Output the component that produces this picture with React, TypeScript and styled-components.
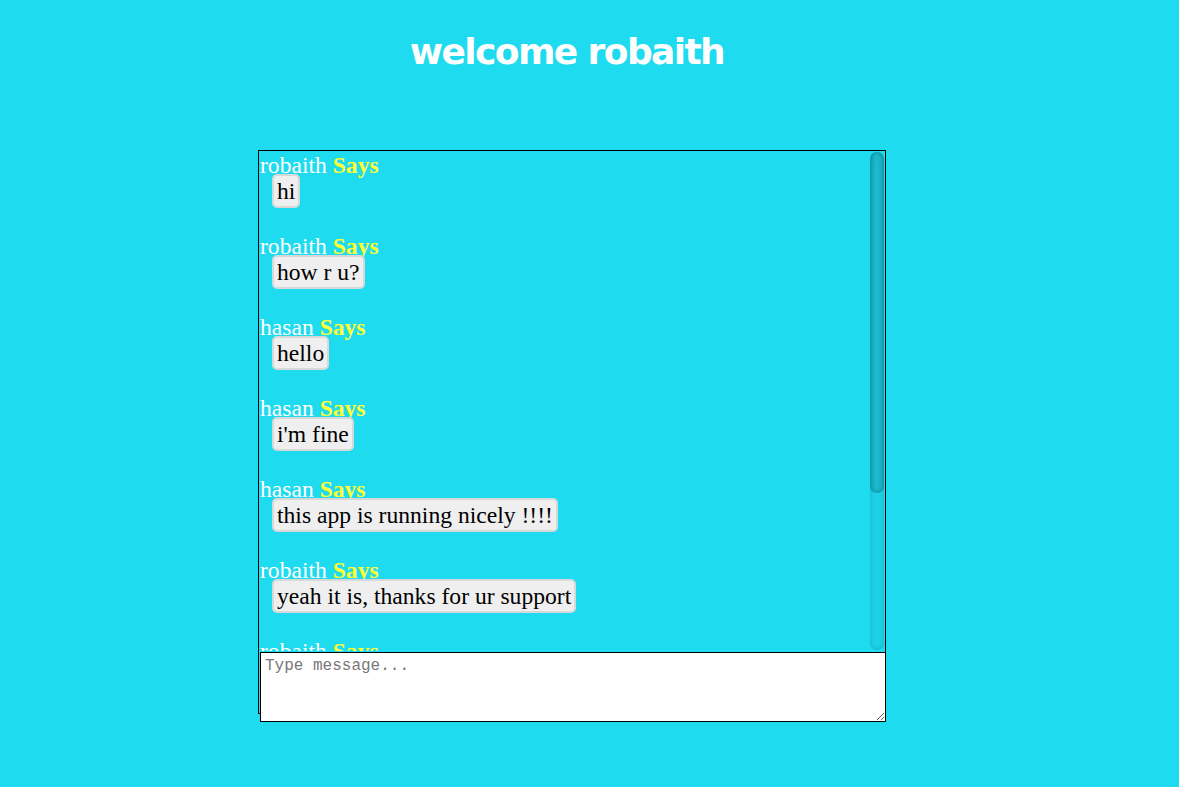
import React from "react";
import styled, { createGlobalStyle } from "styled-components";

const GlobalStyle = createGlobalStyle`
  html, body {
    margin: 0;
    padding: 0;
    background: #1fdbef;
  }
  body {
    font-family: "Liberation Serif", "Times New Roman", serif;
  }
`;

const Page = styled.div`
  width: 1179px;
  height: 787px;
  background: #1fdbef;
  display: flex;
  flex-direction: column;
  overflow: hidden;
`;

const Title = styled.h1`
  margin: 0;
  padding: 27px 45px 0 0;
  height: 50px;
  text-align: center;
  color: #ffffff;
  font-family: "DejaVu Sans", Verdana, sans-serif;
  font-weight: bold;
  font-size: 36px;
  letter-spacing: -1.6px;
  line-height: 50px;
`;

const ChatBox = styled.div`
  margin: 73px 0 0 258px;
  width: 626px;
  height: 562px;
  border: 1px solid #000;
  box-sizing: content-box;
`;

const MessageArea = styled.div`
  display: flex;
  height: 500px;
`;

const MessageList = styled.div`
  flex: 1;
  overflow: hidden;
  padding: 3px 1px 0 1px;
`;

const ScrollTrack = styled.div`
  width: 14px;
  margin: 1px 1px 1px 0;
  border-radius: 10px;
  background: #1dd2e6;
  box-shadow: inset 0 0 4px rgba(0, 60, 70, 0.25);
  display: flex;
  flex-direction: column;
`;

const ScrollThumb = styled.div`
  border-radius: 10px;
  background: linear-gradient(to right, #16a9bb, #1bbcd0 45%, #17aec1);
  box-shadow: inset 0 0 5px rgba(0, 50, 60, 0.35);
`;

const Message = styled.div`
  margin-bottom: 27px;
`;

const Author = styled.div`
  color: #ffffff;
  font-size: 23.6px;
  line-height: 18px;
  padding-top: 2px;
`;

const Says = styled.b`
  color: #ffff33;
`;

const Bubble = styled.span`
  display: inline-block;
  margin-left: 12px;
  padding: 1px 3px;
  background: #efefef;
  border: 2px solid #d8d8d8;
  border-radius: 5px;
  color: #000;
  font-size: 23.6px;
  line-height: 28px;
`;

const Input = styled.textarea`
  display: block;
  margin: 1px 0 0 1px;
  width: 626px;
  height: 70px;
  box-sizing: border-box;
  border: 1px solid #000;
  background: #fff;
  padding: 4px 4px;
  font-family: "Liberation Mono", "DejaVu Sans Mono", monospace;
  font-size: 16px;
  resize: vertical;
  outline: none;
  &::placeholder {
    color: #777;
  }
`;

const messages = [
  { who: "robaith", text: "hi" },
  { who: "robaith", text: "how r u?" },
  { who: "hasan", text: "hello" },
  { who: "hasan", text: "i'm fine" },
  { who: "hasan", text: "this app is running nicely !!!!" },
  { who: "robaith", text: "yeah it is, thanks for ur support" },
  { who: "robaith", text: "ok bye" },
];

export default function App() {
  return (
    <Page>
      <GlobalStyle />
      <Title>welcome robaith</Title>
      <ChatBox>
        <MessageArea>
          <MessageList>
            {messages.map((m, i) => (
              <Message key={i}>
                <Author>
                  {m.who} <Says>Says</Says>
                </Author>
                <Bubble>{m.text}</Bubble>
              </Message>
            ))}
          </MessageList>
          <ScrollTrack>
            <ScrollThumb style={{ height: 341 }} />
          </ScrollTrack>
        </MessageArea>
        <Input placeholder="Type message..." />
      </ChatBox>
    </Page>
  );
}
